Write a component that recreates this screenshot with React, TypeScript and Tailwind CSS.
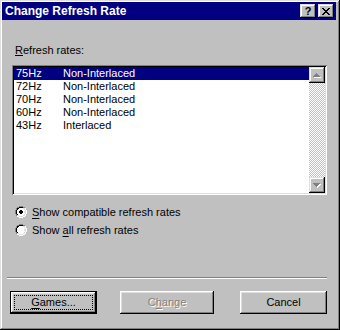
import React from "react";

// win95 style bevels
const raised =
  "shadow-[inset_-1px_-1px_#000,inset_1px_1px_#fff,inset_-2px_-2px_#808080,inset_2px_2px_#dfdfdf]";
const scrollBtn =
  "shadow-[inset_-1px_-1px_#000,inset_1px_1px_#dfdfdf,inset_-2px_-2px_#808080,inset_2px_2px_#fff]";

const X_GLYPH = ["11....11", ".11..11.", "..1111..", "...11...", "..1111..", ".11..11.", "11....11"];

const RADIO = [
  "    DDDD    ",
  "  DDKKKKDD  ",
  " DKKooooLLW ",
  " DKooooooLW ",
  "DKooooooooLW",
  "DKoooooooLLW",
  "DKoooooooLLW",
  "DKooooooooLW",
  " DKooooooLW ",
  " DLLooooLLW ",
  "  WWLLLLWW  ",
  "    WWWW    ",
];
const DOT = [" xx ", "xxxx", "xxxx", " xx "];

const palette: Record<string, string> = {
  D: "#808080",
  K: "#000000",
  W: "#ffffff",
  L: "#dfdfdf",
  o: "#ffffff",
  x: "#000000",
  "1": "#000000",
};

function Pixels({ rows, dx = 0, dy = 0, color }: { rows: string[]; dx?: number; dy?: number; color?: string }) {
  const rects: React.ReactNode[] = [];
  rows.forEach((row, y) =>
    row.split("").forEach((c, x) => {
      if (c === " " || c === ".") return;
      rects.push(<rect key={`${x}-${y}`} x={x + dx} y={y + dy} width={1} height={1} fill={color ?? palette[c]} />);
    })
  );
  return <>{rects}</>;
}

const Radio: React.FC<{ checked?: boolean }> = ({ checked }) => (
  <svg width="12" height="12" viewBox="0 0 12 12" shapeRendering="crispEdges">
    <Pixels rows={RADIO} />
    {checked && <Pixels rows={DOT} dx={4} dy={4} />}
  </svg>
);

const UP = ["...1...", "..111..", ".11111.", "1111111"];
const DOWN = ["1111111", ".11111.", "..111..", "...1..."];

const Arrow: React.FC<{ rows: string[] }> = ({ rows }) => (
  <svg width="8" height="5" viewBox="0 0 8 5" shapeRendering="crispEdges">
    <Pixels rows={rows} dx={1} dy={1} color="#ffffff" />
    <Pixels rows={rows} color="#808080" />
  </svg>
);

const rates = [
  { hz: "75Hz", mode: "Non-Interlaced" },
  { hz: "72Hz", mode: "Non-Interlaced" },
  { hz: "70Hz", mode: "Non-Interlaced" },
  { hz: "60Hz", mode: "Non-Interlaced" },
  { hz: "43Hz", mode: "Interlaced" },
];

export default function App() {
  return (
    <div
      className="w-[340px] h-[330px] bg-[#c0c0c0] flex flex-col pl-[2px] pr-[3px] pt-[2px] text-[11px] text-black shadow-[inset_-1px_-1px_#000,inset_1px_1px_#dfdfdf,inset_-2px_-2px_#808080,inset_2px_2px_#fff]"
      style={{ fontFamily: '"Liberation Sans", Arial, sans-serif' }}
    >
      {/* title bar */}
      <div className="h-[18px] mr-[1px] bg-[#000080] flex items-center pl-[3px] pr-[2px]">
        <span className="text-white font-bold text-[12px] leading-none flex-1">Change Refresh Rate</span>
        <button className={`w-[16px] h-[14px] bg-[#c0c0c0] flex items-center justify-center ${scrollBtn}`}>
          <span className="font-bold text-[11px] leading-none mt-[1px]">?</span>
        </button>
        <button className={`w-[16px] h-[14px] ml-[2px] bg-[#c0c0c0] flex items-center justify-center ${scrollBtn}`}>
          <svg width="8" height="7" viewBox="0 0 8 7" shapeRendering="crispEdges">
            <Pixels rows={X_GLYPH} />
          </svg>
        </button>
      </div>

      <div className="flex flex-col px-[10px]">
        <div className="mt-[24px] h-[13px] leading-[13px] ml-[3px]">
          <u className="no-underline border-b border-black leading-[10px] inline-block">R</u>efresh rates:
        </div>

        {/* list box */}
        <div className="mt-[8px] h-[130px] p-[2px] bg-white flex shadow-[inset_1px_1px_#808080,inset_-1px_-1px_#fff,inset_2px_2px_#000,inset_-2px_-2px_#dfdfdf]">
          <div className="flex-1 flex flex-col">
            {rates.map((r, i) => (
              <div
                key={r.hz}
                className={`h-[13px] leading-[13px] flex pl-[2px] ${i === 0 ? "bg-[#000080] text-white" : ""}`}
              >
                <span className="w-[47px]">{r.hz}</span>
                <span>{r.mode}</span>
              </div>
            ))}
          </div>
          <div className="w-[16px] flex flex-col [background-image:repeating-conic-gradient(#c0c0c0_0%_25%,#ffffff_0%_50%)] [background-size:2px_2px]">
            <div className={`h-[16px] bg-[#c0c0c0] flex items-center justify-center ${scrollBtn}`}>
              <Arrow rows={UP} />
            </div>
            <div className="flex-1" />
            <div className={`h-[16px] bg-[#c0c0c0] flex items-center justify-center ${scrollBtn}`}>
              <Arrow rows={DOWN} />
            </div>
          </div>
        </div>

        {/* radios */}
        <div className="mt-[8px] flex flex-col">
          <label className="h-[18px] flex items-center ml-[3px] gap-[5px]">
            <Radio checked />
            <span>
              <span className="underline underline-offset-[2px]">S</span>how compatible refresh rates
            </span>
          </label>
          <label className="h-[18px] flex items-center ml-[3px] gap-[5px]">
            <Radio />
            <span>
              Show <span className="underline underline-offset-[2px]">a</span>ll refresh rates
            </span>
          </label>
        </div>

        {/* separator */}
        <div className="mt-[38px] -ml-[5px] h-[2px] border-t border-[#808080] border-b border-b-white" />

        {/* buttons */}
        <div className="mt-[12px] flex -ml-[2px]">
          <button className={`w-[87px] h-[23px] bg-[#c0c0c0] border border-black flex p-[3px] ${raised}`}>
            <span className="flex-1 border border-dotted border-black flex items-center justify-center leading-none">
              <span>
                <span className="underline underline-offset-[2px]">G</span>ames...
              </span>
            </span>
          </button>
          <button
            className={`ml-[23px] w-[94px] h-[23px] bg-[#c0c0c0] flex items-center justify-center text-[#808080] [text-shadow:1px_1px_0_#fff] ${raised}`}
          >
            <span>
              C<span className="underline underline-offset-[2px]">h</span>ange
            </span>
          </button>
          <button className={`ml-auto w-[87px] h-[23px] bg-[#c0c0c0] flex items-center justify-center ${raised}`}>
            Cancel
          </button>
        </div>
      </div>
    </div>
  );
}
